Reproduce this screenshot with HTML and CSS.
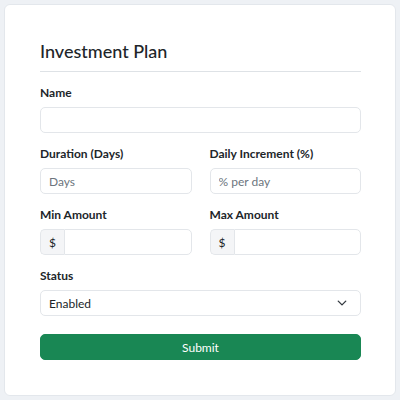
FILE: index.html
```html
<!DOCTYPE html>
<html>
<head>
<meta charset="utf-8">
<link rel="stylesheet" href="styles.css">
</head>
<body>
<div class="card">
  <h2 class="title">Investment Plan</h2>
  <form class="form">
    <div class="field">
      <label class="label">Name</label>
      <input class="control" type="text">
    </div>
    <div class="row">
      <div class="field">
        <label class="label">Duration (Days)</label>
        <input class="control" type="text" placeholder="Days">
      </div>
      <div class="field">
        <label class="label">Daily Increment (%)</label>
        <input class="control" type="text" placeholder="% per day">
      </div>
    </div>
    <div class="row">
      <div class="field">
        <label class="label">Min Amount</label>
        <div class="group"><span class="addon">$</span><input class="control grouped" type="text"></div>
      </div>
      <div class="field">
        <label class="label">Max Amount</label>
        <div class="group"><span class="addon">$</span><input class="control grouped" type="text"></div>
      </div>
    </div>
    <div class="field">
      <label class="label">Status</label>
      <div class="select">
        <span>Enabled</span>
        <svg class="chev" width="10" height="10" viewBox="0 0 16 16"><path d="M2 5l6 6 6-6" fill="none" stroke="#343a40" stroke-width="2.2" stroke-linecap="round" stroke-linejoin="round"/></svg>
      </div>
    </div>
    <button class="submit" type="button">Submit</button>
  </form>
</div>
</body>
</html>
```
FILE: styles.css
```css
* { box-sizing: border-box; }
html, body { margin: 0; }
body {
  background: #eef1f5;
  font-family: "Lato", "Noto Sans", sans-serif;
  color: #212529;
  padding: 4px;
}
.card {
  background: #fff;
  border: 1px solid #e3e7ec;
  border-radius: 6px;
  padding: 33px 34px 33px 35px;
  height: 392px;
}
.title {
  margin: 0;
  font-size: 18px;
  font-weight: 500;
  line-height: 26px;
  padding-bottom: 7px;
  border-bottom: 1px solid #dee2e6;
  margin-bottom: 12px;
}
.form { display: flex; flex-direction: column; }
.field { display: flex; flex-direction: column; margin-bottom: 12px; }
.row { display: grid; grid-template-columns: 1fr 1fr; column-gap: 18px; }
.label {
  font-size: 12px;
  font-weight: 700;
  line-height: 18px;
  margin-bottom: 5px;
}
.control {
  height: 26px;
  border: 1px solid #e3e6ea;
  border-radius: 5px;
  padding: 0 8px;
  font-family: inherit;
  font-size: 12px;
  color: #212529;
  background: #fff;
  outline: none;
  width: 100%;
}
.control::placeholder { color: #6c757d; }
.group { display: flex; height: 26px; }
.addon {
  width: 24px;
  flex: none;
  display: flex;
  align-items: center;
  justify-content: center;
  background: #f4f5f7;
  border: 1px solid #e3e6ea;
  border-right: none;
  border-radius: 5px 0 0 5px;
  font-size: 12px;
}
.grouped { border-radius: 0 5px 5px 0; }
.select {
  height: 26px;
  border: 1px solid #e3e6ea;
  border-radius: 5px;
  padding: 0 8px;
  display: flex;
  align-items: center;
  justify-content: space-between;
  font-size: 12px;
}
.chev { margin-right: 5px; }
.submit {
  margin-top: 6px;
  height: 26px;
  background: #198754;
  border: 1px solid #198754;
  border-radius: 5px;
  color: #fff;
  font-family: inherit;
  font-size: 12px;
  padding: 0;
}
```
